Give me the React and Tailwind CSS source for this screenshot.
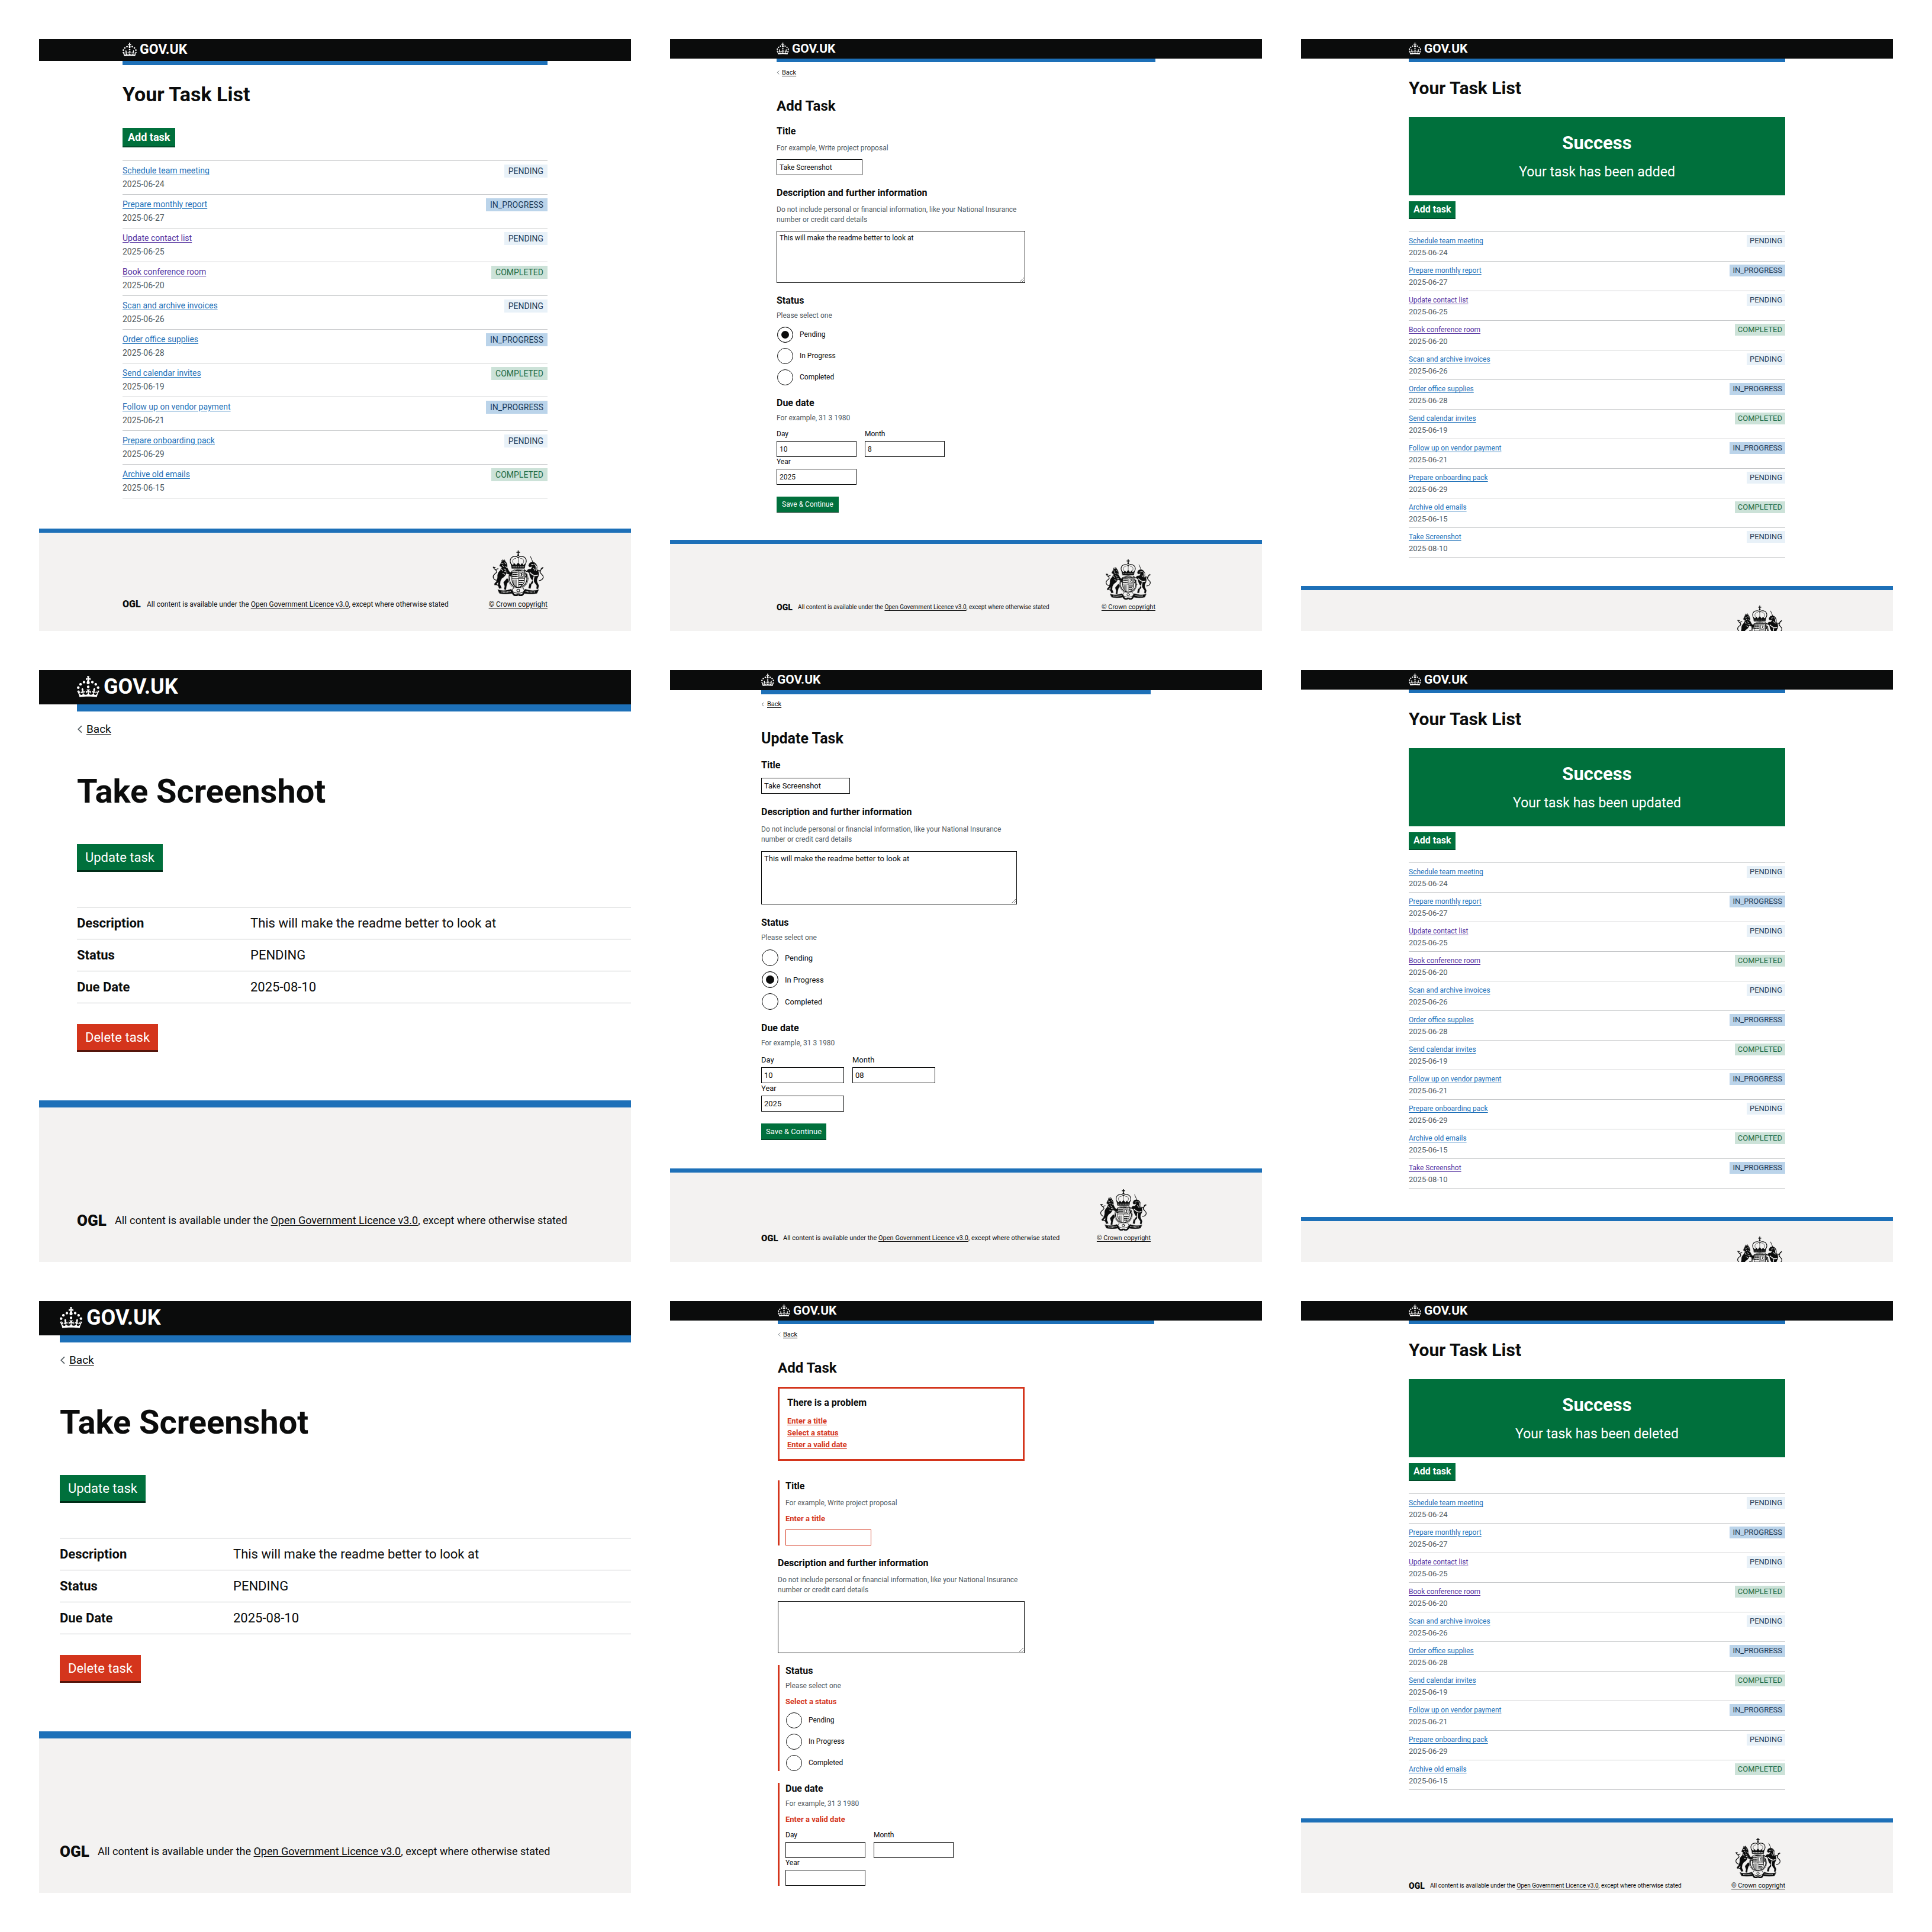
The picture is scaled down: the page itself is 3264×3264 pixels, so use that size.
import { useId } from "react";

const themes = {
  md: {
    bar: "h-[37px] gap-[5px] pb-[2px]",
    crown: "w-[24px] h-[23px]",
    word: "text-[23px] leading-[24px]",
    rule: "h-[7px]",
    footRule: "border-t-[7px]",
    foot: "pt-[30px] text-[12px] leading-[20px]",
    copyright: "text-[12px]",
    arms: "w-[87px] h-[77px] mb-[4px]",
    ogl: "text-[16px] w-[31px] mr-[10px]",
    h1: "mt-[30px] text-[34px] leading-[38px]",
    button: "h-[33px] border-b-2 px-[9px] text-[18px]",
    list: "mt-[22px] mb-[51px] text-[14px] leading-[19px]",
    row: "pt-[7px] pb-[7px] gap-[4px]",
    date: "text-[14px]",
    tag: "mt-[6px] h-[22px] px-[7px] text-[14px] leading-[22px]",
  },
  sm: {
    bar: "h-[33px] gap-[5px] pb-[2px]",
    crown: "w-[21px] h-[20px]",
    word: "text-[21px] leading-[22px]",
    rule: "h-[6px]",
    footRule: "border-t-[7px]",
    foot: "pt-[26px] text-[10px] leading-[18px]",
    copyright: "text-[11px]",
    arms: "w-[78px] h-[68px] mb-[4px]",
    ogl: "text-[14px] w-[27px] mr-[9px]",
    back: "mt-[10px] text-[11px] leading-[15px] gap-[4px]",
    chevron: "w-[5px] h-[7px]",
    h1: "mt-[27px] text-[30px] leading-[33px]",
    formH1: "mt-[36px] text-[24px] leading-[26px]",
    button: "h-[30px] border-b-2 px-[8px] text-[16px]",
    list: "mt-[21px] mb-[48px] text-[12px] leading-[17px]",
    row: "pt-[7px] pb-[6px] gap-[2px]",
    date: "text-[13px]",
    tag: "mt-[5px] h-[20px] px-[5px] text-[13px] leading-[20px]",
    group: "mt-[20px]",
    label: "text-[16px] leading-[20px]",
    hint: "text-[12px] leading-[17px]",
    text: "text-[12px] leading-[17px]",
    field: "h-[27px] text-[12px] leading-[17px] px-[4px]",
    gap: "mt-[10px]",
    title: "w-[145px]",
    area: "h-[88px] px-[4px] py-[3px] text-[12px] leading-[17px]",
    radios: "mt-[10px] gap-[9px]",
    radio: "w-[27px] h-[27px] checked:shadow-[inset_0_0_0_6px_white]",
    radioLabel: "gap-[11px] pl-px",
    dates: "mt-[10px] gap-x-[14px]",
    dateField: "w-[135px] mt-[3px]",
    save: "mt-[20px] mb-[46px] h-[27px] px-[9px] text-[12px] border-b",
  },
  mdForm: {
    bar: "h-[34px] gap-[5px] pb-[2px]",
    crown: "w-[22px] h-[21px]",
    word: "text-[21px] leading-[22px]",
    rule: "h-[7px]",
    footRule: "border-t-[7px]",
    foot: "pt-[28px] text-[11px] leading-[18px]",
    copyright: "text-[11px]",
    arms: "w-[80px] h-[70px] mb-[4px]",
    ogl: "text-[15px] w-[28px] mr-[9px]",
    back: "mt-[9px] text-[11px] leading-[16px] gap-[5px]",
    chevron: "w-[5px] h-[8px]",
    formH1: "mt-[36px] text-[25px] leading-[28px]",
    group: "mt-[21px]",
    label: "text-[16px] leading-[20px]",
    hint: "text-[12px] leading-[17px]",
    text: "text-[13px] leading-[17px]",
    field: "h-[27px] text-[13px] leading-[17px] px-[4px]",
    gap: "mt-[11px]",
    title: "w-[150px]",
    area: "h-[90px] px-[4px] py-[3px] text-[13px] leading-[17px]",
    radios: "mt-[11px] gap-[9px]",
    radio: "w-[28px] h-[28px] checked:shadow-[inset_0_0_0_6px_white]",
    radioLabel: "gap-[11px] pl-px",
    dates: "mt-[11px] gap-x-[14px]",
    dateField: "w-[140px] mt-[4px]",
    save: "mt-[20px] mb-[48px] h-[28px] px-[8px] text-[13px] border-b",
  },
  lg: {
    bar: "h-[58px] gap-[7px] pb-[3px]",
    crown: "w-[38px] h-[36px]",
    word: "text-[36px] leading-[38px]",
    rule: "h-[12px]",
    footRule: "border-t-[12px]",
    foot: "pt-[175px] text-[18px] leading-[32px]",
    ogl: "text-[26px] w-[48px] mr-[16px]",
    back: "mt-[19px] text-[19px] leading-[22px] gap-[7px]",
    chevron: "w-[9px] h-[14px]",
    formH1: "mt-[64px] text-[56px] leading-[60px]",
    button: "h-[47px] border-b-[3px] px-[14px] text-[22px]",
  },
};

const TASKS = [
  ["Schedule team meeting", "2025-06-24", "PENDING"],
  ["Prepare monthly report", "2025-06-27", "IN_PROGRESS"],
  ["Update contact list", "2025-06-25", "PENDING", true],
  ["Book conference room", "2025-06-20", "COMPLETED", true],
  ["Scan and archive invoices", "2025-06-26", "PENDING"],
  ["Order office supplies", "2025-06-28", "IN_PROGRESS"],
  ["Send calendar invites", "2025-06-19", "COMPLETED"],
  ["Follow up on vendor payment", "2025-06-21", "IN_PROGRESS"],
  ["Prepare onboarding pack", "2025-06-29", "PENDING"],
  ["Archive old emails", "2025-06-15", "COMPLETED"],
];

const TAG_COLOURS = {
  PENDING: "bg-[#e8f1f8] text-[#1b3a57]",
  IN_PROGRESS: "bg-[#bbd4ea] text-[#1b3a57]",
  COMPLETED: "bg-[#cce2d8] text-[#1c6b44]",
};

function Crown({ className }) {
  return (
    <svg viewBox="0 0 32 30" className={className} fill="currentColor" aria-hidden="true">
      <path d="M22.6 10.4c-1 .4-2-.1-2.4-1-.4-.9.1-2 1-2.4.9-.4 2 .1 2.4 1s-.1 2-1 2.4m-5.9 6.7c-.9.4-2-.1-2.4-1-.4-.9.1-2 1-2.4.9-.4 2 .1 2.4 1s-.1 2-1 2.4m10.8-3.7c-1 .4-2-.1-2.4-1-.4-.9.1-2 1-2.4.9-.4 2 .1 2.4 1s0 2-1 2.4m3.3 4.8c-1 .4-2-.1-2.4-1-.4-.9.1-2 1-2.4.9-.4 2 .1 2.4 1s-.1 2-1 2.4M17 4.7l2.3 1.2V2.5l-2.3.7-.2-.2.9-3h-3.4l.9 3-.2.2c-.1.1-2.3-.7-2.3-.7v3.4L15 4.7c.1.1.1.2.2.2l-1.3 4c-.1.2-.1.4-.1.6 0 1.1.8 2 1.9 2.2h.7c1-.2 1.9-1.1 1.9-2.1 0-.2 0-.4-.1-.6l-1.3-4c-.1-.2 0-.2.1-.3m-7.6 5.7c.9.4 2-.1 2.4-1 .4-.9-.1-2-1-2.4-.9-.4-2 .1-2.4 1s0 2 1 2.4m-5 3c.9.4 2-.1 2.4-1 .4-.9-.1-2-1-2.4-.9-.4-2 .1-2.4 1s.1 2 1 2.4m-3.2 4.8c.9.4 2-.1 2.4-1 .4-.9-.1-2-1-2.4-.9-.4-2 .1-2.4 1s0 2 1 2.4m14.8 11c4.4 0 8.6.3 12.3.8 1.1-4.5 2.4-7 3.7-8.8l-2.5-.9c.2 1.3.3 1.9 0 2.7-.4-.4-.8-1.1-1.1-2.3l-1.2 4c.7-.5 1.3-.8 2-.9-1.1 2.5-2.6 3.1-3.5 3-1.1-.2-1.7-1.2-1.5-2.1.3-1.2 1.5-1.5 2.1-.1 1.1-2.3-.8-3-2-2.3 1.9-1.9 2.1-3.5.6-5.6-2.1 1.6-2.1 3.2-1.2 5.5-1.2-1.4-3.2-.6-2.5 1.6.9-1.4 2.1-.5 1.9.8-.2 1.1-1.7 2.1-3.5 1.9-2.7-.2-2.9-2.1-2.9-3.6.7-.1 1.9.5 2.9 1.9l.4-4.3c-1.1 1.1-2.1 1.4-3.2 1.4.4-1.2 2.1-3 2.1-3h-5.4s1.7 1.9 2.1 3c-1.1 0-2.1-.2-3.2-1.4l.4 4.3c1-1.4 2.2-2 2.9-1.9-.1 1.5-.2 3.4-2.9 3.6-1.9.2-3.4-.8-3.5-1.9-.2-1.3 1-2.2 1.9-.8.7-2.3-1.2-3-2.5-1.6.9-2.2.9-3.9-1.2-5.5-1.5 2-1.3 3.7.6 5.6-1.2-.7-3.1 0-2 2.3.6-1.4 1.8-1.1 2.1.1.2.9-.3 1.9-1.5 2.1-.9.2-2.4-.5-3.5-3 .6 0 1.2.3 2 .9l-1.2-4c-.3 1.1-.7 1.9-1.1 2.3-.3-.8-.2-1.4 0-2.7l-2.9.9C1.3 23 2.6 25.5 3.7 30c3.7-.5 7.9-.8 12.3-.8" />
    </svg>
  );
}

/* Royal coat of arms: crown, gartered shield, lion, unicorn and motto ribbon. */
function Arms({ className }) {
  return (
    <svg viewBox="0 0 260 230" className={className} fill="none" stroke="#0b0c0c" strokeLinecap="round" strokeLinejoin="round" aria-hidden="true">
      <g strokeWidth="4">
        <path d="M130 2v18M123 9h14" strokeWidth="5" />
        <circle cx="130" cy="24" r="5" fill="#0b0c0c" stroke="none" />
        <path d="M100 76C82 58 88 32 112 30c8-1 14 2 18 8 4-6 10-9 18-8 24 2 30 28 12 46" strokeWidth="4" strokeDasharray="5 3" />
        <path d="M106 66c-8-12-4-26 12-26M154 66c8-12 4-26-12-26M130 36v24" strokeWidth="2" />
        <path d="M94 66l9 9 8-10 8 10 11-13 11 13 8-10 8 10 9-9-4 24H98z" fill="#0b0c0c" strokeWidth="2" />
        <path d="M102 83h56" stroke="#f3f2f1" strokeWidth="3" strokeDasharray="4 5" />
      </g>
      <g>
        <circle cx="130" cy="143" r="50" fill="#f3f2f1" strokeWidth="2" />
        <circle cx="130" cy="143" r="44" strokeWidth="5" strokeDasharray="2 5" />
        <path d="M98 104h64v44c0 22-18 34-32 40-14-6-32-18-32-40z" fill="#f3f2f1" strokeWidth="3" />
        <path d="M130 104v84M98 142h64" strokeWidth="2" />
        <path d="M103 112h22M103 122h22M103 132h22M135 152h22M135 162h20M135 172h14" strokeWidth="5" strokeDasharray="6 4" />
        <path d="M136 109h20v27h-20z" strokeWidth="2" />
        <path d="M142 114l8 6-6 6 8 7M150 112l-4 8M142 130l6-6" strokeWidth="3" />
        <path d="M108 148v20M114 148v27M120 148v32M104 150c-2 14 4 24 10 28" strokeWidth="2" />
      </g>
      <g fill="#0b0c0c" strokeWidth="1">
        <path d="M44 60c4-9 18-10 24-2 6 8 8 18 6 28 6 10 8 20 18 26l8 2-2 8c-10 2-22-4-28-8-4 14-12 20-22 26l-8 14-2 18 8 18-12 2-6-16 2-18-12 14-6 4-3-7 13-15 4-20c-2-14 4-26 14-34l4-14-8-8z" />
        <path d="M46 54l4-7 5 5 4-6 5 8" strokeWidth="3" fill="none" />
        <path d="M72 142c-6 10-12 12-16 20l6 18-3 16 9 3 2-17 5-18c7-4 6-14 4-20z" />
        <path d="M34 178l-16-6M84 116l16-6M86 126l14 4" strokeWidth="5" fill="none" />
        <path d="M28 150C4 152-2 130 10 120c10-8 16-12 8-20-6-6-12-8-14-16M4 84l10 2M28 92l-12 4" strokeWidth="4" fill="none" />
        <path d="M46 66l8 2M62 62l6 6M50 76l8 6M66 80l6 6M58 92l10 8M44 92l8 12M62 106l12 4M40 82l6 4M52 116l10 4" stroke="#f3f2f1" strokeWidth="3" />
      </g>
      <g fill="#0b0c0c" strokeWidth="1">
        <path d="M192 31l12 28" strokeWidth="3" strokeDasharray="4 2" />
        <path d="M186 66c6-8 18-10 28-4 10 8 14 20 12 32 8 12 10 24 6 36-6 10-10 20-6 30l8 18-4 16-8-2 2-14-14-20-14 14-4 20-10-2 6-24 12-16c-8-10-14-24-14-36l-12-8c0-8 8-14 20-12l8-14-14 4-6-6z" />
        <path d="M172 106l-12-8M174 120l-8 14" strokeWidth="5" fill="none" />
        <path d="M236 152c20-2 26-20 14-30-8-8-14-14-8-22 4-6 10-8 12-14M256 88l-10 2M232 100l12 4" strokeWidth="4" fill="none" />
        <path d="M196 72l10-2M212 68c8 8 10 16 6 28M222 78c3 10 3 18 0 24M208 90l6 10" stroke="#f3f2f1" strokeWidth="3" fill="none" />
        <path d="M190 112c14 14 28 18 38 12M210 132c-6 20-2 36 4 58M200 150l-10 16" stroke="#f3f2f1" strokeWidth="5" strokeDasharray="5 3" fill="none" />
      </g>
      <g>
        <path d="M28 198c20 8 40 6 66-2l12 14-4 6c-26 4-50 4-66 0zM232 198c-20 8-40 6-66-2l-12 14 4 6c26 4 50 4 66 0z" fill="#0b0c0c" strokeWidth="2" />
        <path d="M46 209c16 3 32 1 46-3M168 206c16 4 30 5 46 3" stroke="#f3f2f1" strokeWidth="5" strokeDasharray="4 3" strokeLinecap="butt" />
        <path d="M106 190c-8 8-8 14 0 20 14 8 34 8 48 0 8-6 8-12 0-20" fill="#f3f2f1" strokeWidth="3" />
        <path d="M104 218c6 10 16 10 22 6M156 218c-6 10-16 10-22 6" strokeWidth="9" />
        <circle cx="130" cy="202" r="7" strokeWidth="3" />
      </g>
    </svg>
  );
}

function Header({ t, wrap }) {
  return (
    <header className="shrink-0">
      <div className="bg-[#0b0c0c] text-white">
        <a href="#home" className={`flex items-center ${t.bar} ${wrap}`}>
          <Crown className={t.crown} />
          <span className={`font-bold ${t.word}`}>GOV.UK</span>
        </a>
      </div>
      <div className={`bg-[#1d70b8] ${t.rule} ${wrap}`} />
    </header>
  );
}

function Footer({ t, wrap, crestOnly }) {
  return (
    <footer className={`shrink-0 grow border-[#1d70b8] bg-[#f3f2f1] ${t.footRule}`}>
      <div className={`flex items-end whitespace-nowrap ${t.foot} ${wrap}`}>
        {!crestOnly && (
          <p className="flex items-center">
            <span className={`font-black ${t.ogl}`}>OGL</span>
            <span>
              All content is available under the{" "}
              <a href="#licence" className="underline underline-offset-2">Open Government Licence v3.0</a>, except where otherwise stated
            </span>
          </p>
        )}
        {crestOnly && <Arms className={`mr-[4px] ml-auto ${t.arms}`} />}
        {!crestOnly && t.arms && (
          <a href="#copyright" className={`ml-auto flex flex-col items-center underline underline-offset-2 ${t.copyright}`}>
            <Arms className={t.arms} />
            © Crown copyright
          </a>
        )}
      </div>
    </footer>
  );
}

function Screen({ t, wrap, crestOnly, noFooter, children }) {
  return (
    <section className="flex aspect-square min-w-0 flex-col overflow-hidden bg-white">
      <Header t={t} wrap={wrap} />
      <main className={`shrink-0 ${wrap}`}>{children}</main>
      {!noFooter && <Footer t={t} wrap={wrap} crestOnly={crestOnly} />}
    </section>
  );
}

function BackLink({ t }) {
  return (
    <a href="#back" className={`flex items-center ${t.back}`}>
      <svg viewBox="0 0 8 12" className={t.chevron} fill="none" stroke="#505a5f" strokeWidth="1.5" aria-hidden="true">
        <path d="M7 1L2 6l5 5" />
      </svg>
      <span className="underline underline-offset-2">Back</span>
    </a>
  );
}

function ListScreen({ t, wrap, tasks, message, buttonGap, crestOnly }) {
  return (
    <Screen t={t} wrap={wrap} crestOnly={crestOnly}>
      <h1 className={`font-bold ${t.h1}`}>Your Task List</h1>
      {message && (
        <div className="mt-[33px] bg-[#00703c] pt-[27px] pb-[27px] text-center text-white">
          <h2 className="text-[31px] leading-[33px] font-bold">Success</h2>
          <p className="mt-[20px] text-[23px] leading-[25px]">{message}</p>
        </div>
      )}
      <button type="button" className={`block border-[#004d2a] bg-[#00703c] font-bold text-white ${t.button} ${buttonGap}`}>
        Add task
      </button>
      <ul className={`border-t border-[#c6c8ca] ${t.list}`}>
        {tasks.map(([name, date, status, visited]) => (
          <li key={name} className="flex items-start justify-between border-b border-[#c6c8ca]">
            <div className={`flex flex-col items-start ${t.row}`}>
              <a href="#task" className={`underline underline-offset-2 ${visited ? "text-[#54319f]" : "text-[#1d70b8]"}`}>{name}</a>
              <span className={`text-[#505a5f] ${t.date}`}>{date}</span>
            </div>
            <strong className={`font-normal ${t.tag} ${TAG_COLOURS[status]}`}>{status}</strong>
          </li>
        ))}
      </ul>
    </Screen>
  );
}

function DetailScreen({ wrap }) {
  const t = themes.lg;
  const rows = [
    ["Description", "This will make the readme better to look at"],
    ["Status", "PENDING"],
    ["Due Date", "2025-08-10"],
  ];
  return (
    <Screen t={t} wrap={wrap}>
      <BackLink t={t} />
      <h1 className={`font-bold ${t.formH1}`}>Take Screenshot</h1>
      <button type="button" className={`mt-[59px] block border-[#002d18] bg-[#00703c] text-white ${t.button}`}>Update task</button>
      <dl className="mt-[59px] border-t border-[#b9bcbe] text-[22px] leading-[29px]">
        {rows.map(([k, v]) => (
          <div key={k} className="flex border-b border-[#b9bcbe] py-[12px]">
            <dt className="w-[293px] font-bold">{k}</dt>
            <dd>{v}</dd>
          </div>
        ))}
      </dl>
      <button type="button" className={`mt-[35px] mb-[82px] block border-[#55150b] bg-[#d4351c] text-white ${t.button}`}>Delete task</button>
    </Screen>
  );
}

const errorBar = "border-l-[3px] border-[#d4351c] pl-[10px]";

function ErrorText({ children }) {
  return <p className="mt-[9px] text-[13px] leading-[17px] font-bold text-[#d4351c]">{children}</p>;
}

function FormScreen({ t, wrap, column, heading, values = {}, titleHint, errors }) {
  const id = useId();
  const dates = [
    ["Day", values.day],
    ["Month", values.month],
    ["Year", values.year],
  ];
  return (
    <Screen t={t} wrap={wrap} noFooter={errors}>
      <BackLink t={t} />
      <h1 className={`font-bold ${t.formH1}`}>{heading}</h1>
      <form className={column}>
        {errors && (
          <div role="alert" className="mt-[19px] mb-[33px] border-[3px] border-[#d4351c] px-[13px] pt-[14px] pb-[14px]">
            <h2 className={`font-bold ${t.label}`}>There is a problem</h2>
            <ul className="mt-[11px] text-[13px] leading-[20px] font-bold text-[#d4351c]">
              {["Enter a title", "Select a status", "Enter a valid date"].map((e) => (
                <li key={e}><a href="#field" className="underline underline-offset-2">{e}</a></li>
              ))}
            </ul>
          </div>
        )}
        <div className={errors ? errorBar : t.group}>
          <label htmlFor={`${id}-title`} className={`block font-bold ${t.label}`}>Title</label>
          {titleHint && <p className={`text-[#505a5f] ${t.hint} ${t.gap}`}>For example, Write project proposal</p>}
          {errors && <ErrorText>Enter a title</ErrorText>}
          <input
            id={`${id}-title`}
            type="text"
            defaultValue={values.title}
            className={`block border ${errors ? "border-[#d4351c]" : "border-[#0b0c0c]"} ${t.field} ${t.gap} ${t.title}`}
          />
        </div>
        <div className={t.group}>
          <label htmlFor={`${id}-desc`} className={`block font-bold ${t.label}`}>Description and further information</label>
          <p className={`text-[#505a5f] ${t.hint} ${t.gap}`}>
            Do not include personal or financial information, like your National Insurance number or credit card details
          </p>
          <textarea
            id={`${id}-desc`}
            defaultValue={values.description}
            className={`block w-full border border-[#0b0c0c] ${t.area} ${t.gap}`}
          />
        </div>
        <div className={`${t.group} ${errors ? errorBar : ""}`}>
          <fieldset>
            <legend className={`font-bold ${t.label}`}>Status</legend>
            <p className={`mt-[7px] text-[#505a5f] ${t.hint}`}>Please select one</p>
            {errors && <ErrorText>Select a status</ErrorText>}
            <div className={`flex flex-col ${t.radios}`}>
              {["Pending", "In Progress", "Completed"].map((s) => (
                <label key={s} className={`flex items-center ${t.text} ${t.radioLabel}`}>
                  <input
                    type="radio"
                    name={`${id}-status`}
                    defaultChecked={values.status === s}
                    className={`appearance-none rounded-full border border-[#0b0c0c] checked:bg-[#0b0c0c] ${t.radio}`}
                  />
                  {s}
                </label>
              ))}
            </div>
          </fieldset>
        </div>
        <div className={`${t.group} ${errors ? errorBar : ""}`}>
          <fieldset>
            <legend className={`font-bold ${t.label}`}>Due date</legend>
            <p className={`mt-[7px] text-[#505a5f] ${t.hint}`}>For example, 31 3 1980</p>
            {errors && <ErrorText>Enter a valid date</ErrorText>}
            <div className={`flex flex-wrap ${t.dates}`}>
              {dates.map(([k, v]) => (
                <label key={k} className={`block ${t.text}`}>
                  {k}
                  <input type="text" inputMode="numeric" defaultValue={v} className={`block border border-[#0b0c0c] ${t.field} ${t.dateField}`} />
                </label>
              ))}
            </div>
          </fieldset>
        </div>
        {!errors && (
          <button type="submit" className={`block border-[#002d18] bg-[#00703c] text-white ${t.save}`}>Save &amp; Continue</button>
        )}
      </form>
    </Screen>
  );
}

const smWrap = "mx-auto w-full max-w-[636px]";
const filled = {
  title: "Take Screenshot",
  description: "This will make the readme better to look at",
  day: "10",
  year: "2025",
};

export default function App() {
  return (
    <div className="grid grid-cols-3 gap-[66px] bg-white p-[66px] font-['Roboto','Liberation_Sans',sans-serif] text-[#0b0c0c]">
      <ListScreen t={themes.md} wrap="mx-auto w-full max-w-[718px]" tasks={TASKS} buttonGap="mt-[38px]" />
      <FormScreen
        t={themes.sm}
        wrap="mx-auto w-full max-w-[640px]"
        column="max-w-[420px]"
        heading="Add Task"
        titleHint
        values={{ ...filled, month: "8", status: "Pending" }}
      />
      <ListScreen
        t={themes.sm}
        wrap={smWrap}
        tasks={[...TASKS, ["Take Screenshot", "2025-08-10", "PENDING"]]}
        message="Your task has been added"
        buttonGap="mt-[10px]"
        crestOnly
      />
      <DetailScreen wrap="ml-[64px]" />
      <FormScreen
        t={themes.mdForm}
        wrap="ml-[154px] max-w-[658px]"
        column="max-w-[432px]"
        heading="Update Task"
        values={{ ...filled, month: "08", status: "In Progress" }}
      />
      <ListScreen
        t={themes.sm}
        wrap={smWrap}
        tasks={[...TASKS, ["Take Screenshot", "2025-08-10", "IN_PROGRESS", true]]}
        message="Your task has been updated"
        buttonGap="mt-[10px]"
        crestOnly
      />
      <DetailScreen wrap="ml-[35px]" />
      <FormScreen t={themes.sm} wrap={smWrap} column="max-w-[417px]" heading="Add Task" titleHint errors />
      <ListScreen t={themes.sm} wrap={smWrap} tasks={TASKS} message="Your task has been deleted" buttonGap="mt-[10px]" />
    </div>
  );
}
